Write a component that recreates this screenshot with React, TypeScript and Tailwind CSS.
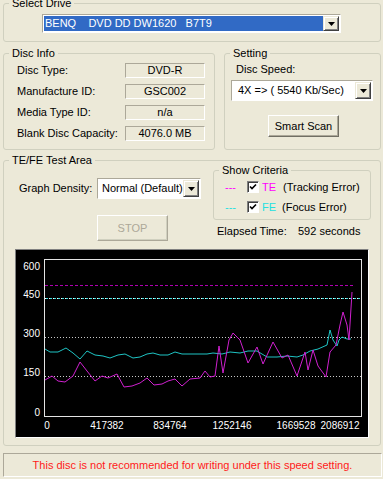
import React from "react";

const cyanPts = [
  [45, 349], [50, 352], [58, 352], [66, 348], [73, 353], [80, 359], [87, 351], [95, 355],
  [103, 356], [110, 358], [118, 355], [125, 354], [133, 358], [140, 357], [147, 354],
  [153, 353], [160, 355], [168, 355], [175, 352], [182, 354], [190, 354], [207, 354],
  [213, 353], [222, 354], [230, 352], [240, 353], [248, 351], [257, 351], [267, 357],
  [277, 357], [287, 356], [297, 357], [303, 355], [310, 351], [318, 349], [327, 345],
  [330, 330], [333, 340], [337, 346], [339, 340], [342, 337], [347, 339], [351, 339],
];

const magentaPts = [
  [45, 380], [52, 376], [58, 381], [65, 382], [73, 376], [80, 362], [87, 371], [95, 381],
  [102, 376], [108, 378], [117, 374], [124, 387], [132, 386], [140, 383], [147, 378],
  [154, 385], [162, 384], [168, 381], [175, 379], [182, 386], [190, 379], [200, 378],
  [205, 371], [210, 377], [215, 376], [219, 346], [223, 373], [229, 340], [233, 333],
  [240, 340], [248, 363], [257, 347], [263, 364], [273, 342], [282, 358], [288, 355],
  [297, 376], [305, 352], [308, 370], [313, 350], [318, 366], [326, 377], [330, 352],
  [336, 345], [340, 325], [343, 312], [347, 325], [349, 340], [352, 292],
];

const yLabels = [
  { t: "600", y: 266 },
  { t: "450", y: 294 },
  { t: "300", y: 333 },
  { t: "150", y: 372 },
  { t: "0", y: 412 },
];

const xLabels = [
  { t: "0", x: 47 },
  { t: "417382", x: 107 },
  { t: "834764", x: 170 },
  { t: "1252146", x: 232 },
  { t: "1669528", x: 296 },
  { t: "2086912", x: 340 },
];

function Group({ title, className, children }: { title: string; className: string; children?: React.ReactNode }) {
  return (
    <fieldset className={"min-w-0 rounded-[3px] border border-[#D0D0BF] " + className}>
      <legend className="ml-[5px] px-[3px] leading-[13px]">{title}</legend>
      {children}
    </fieldset>
  );
}

function ArrowBtn() {
  return (
    <span className="flex h-full w-[16px] shrink-0 items-center justify-center border border-t-[#ECE9D8] border-l-[#ECE9D8] border-r-[#404040] border-b-[#404040] bg-[#ECE9D8] shadow-[inset_1px_1px_0_#fff,inset_-1px_-1px_0_#808080]">
      <svg width="7" height="4" viewBox="0 0 7 4">
        <path d="M0 0h7L3.5 4z" fill="#000" />
      </svg>
    </span>
  );
}

function Check() {
  return (
    <span className="flex h-[12px] w-[12px] shrink-0 items-center justify-center border border-t-[#808080] border-l-[#808080] border-b-white border-r-white bg-white shadow-[inset_1px_1px_0_#404040]">
      <svg width="8" height="8" viewBox="0 0 8 8">
        <path d="M1 3.5L3 5.5L7 1.5" stroke="#000" strokeWidth="1.6" fill="none" />
      </svg>
    </span>
  );
}

function InfoRow({ label, value }: { label: string; value: string }) {
  return (
    <div className="flex h-[15px] items-center pl-[13px]">
      <span className="w-[108px]">{label}</span>
      <span className="flex h-[15px] w-[80px] items-center justify-center border border-t-[#ACA899] border-l-[#ACA899] border-b-white border-r-white">
        {value}
      </span>
    </div>
  );
}

export default function App() {
  return (
    <div className="flex h-[479px] w-[383px] flex-col overflow-hidden bg-[#ECE9D8] pl-[3px] pr-[2px] font-['Liberation_Sans',Arial,sans-serif] text-[11px] leading-[13px] text-black">
      {/* select drive */}
      <Group title="Select Drive" className="-mt-[3px] h-[45px] w-[378px] shrink-0">
        <div className="ml-[38px] mt-[4px] flex h-[19px] w-[299px] border border-t-[#ACA899] border-l-[#ACA899] border-b-white border-r-white bg-white p-[1px]">
          <span className="flex flex-1 items-center whitespace-pre bg-[#316AC5] pl-[1px] text-white">
            {"BENQ    DVD DD DW1620   B7T9"}
          </span>
          <ArrowBtn />
        </div>
      </Group>

      <div className="mt-[5px] flex shrink-0">
        <Group title="Disc Info" className="h-[103px] w-[212px]">
          <div className="flex flex-col gap-[6px] pt-[3px]">
            <InfoRow label="Disc Type:" value="DVD-R" />
            <InfoRow label="Manufacture ID:" value="GSC002" />
            <InfoRow label="Media Type ID:" value="n/a" />
            <InfoRow label="Blank Disc Capacity:" value="4076.0 MB" />
          </div>
        </Group>
        <Group title="Setting" className="ml-[9px] h-[103px] w-[157px]">
          <div className="mt-[3px] pl-[11px]">Disc Speed:</div>
          <div className="ml-[6px] mt-[4px] flex h-[21px] w-[142px] border border-t-[#ACA899] border-l-[#ACA899] border-b-white border-r-white bg-white p-[1px]">
            <span className="flex flex-1 items-center pl-[5px]">4X =&gt; ( 5540 Kb/Sec)</span>
            <ArrowBtn />
          </div>
          <button className="ml-[43px] mt-[14px] flex h-[22px] w-[71px] items-center justify-center border border-t-white border-l-white border-r-[#716F64] border-b-[#716F64] bg-[#ECE9D8] shadow-[inset_-1px_-1px_0_#ACA899]">
            Smart Scan
          </button>
        </Group>
      </div>

      {/* test area */}
      <Group title="TE/FE Test Area" className="mt-[4px] h-[292px] w-[378px] shrink-0">
        <div className="flex h-[82px]">
          <div className="w-[209px] pt-[11px]">
            <div className="flex items-center pl-[15px]">
              <span className="w-[78px]">Graph Density:</span>
              <div className="flex h-[21px] w-[104px] border border-t-[#ACA899] border-l-[#ACA899] border-b-white border-r-white bg-white p-[1px]">
                <span className="flex flex-1 items-center pl-[3px]">Normal (Default)</span>
                <ArrowBtn />
              </div>
            </div>
            <button className="ml-[93px] mt-[16px] flex h-[26px] w-[71px] items-center justify-center border border-t-white border-l-white border-r-[#ACA899] border-b-[#ACA899] bg-[#ECE9D8] text-[#ACA899] shadow-[inset_-1px_-1px_0_#D0D0BF]">
              STOP
            </button>
          </div>
          <div className="-mt-[3px]">
            <Group title="Show Criteria" className="h-[56px] w-[158px]">
              <div className="mt-[3px] flex h-[14px] items-center pl-[11px]">
                <span className="w-[22px] text-[#ff00ff]">---</span>
                <Check />
                <span className="ml-[3px] w-[21px] text-[#ff00ff]">TE</span>
                <span>(Tracking Error)</span>
              </div>
              <div className="mt-[6px] flex h-[14px] items-center pl-[11px]">
                <span className="w-[22px] text-[#22e0e0]">---</span>
                <Check />
                <span className="ml-[3px] w-[20px] text-[#22e0e0]">FE</span>
                <span>(Focus Error)</span>
              </div>
            </Group>
            <div className="ml-[4px] mt-[5px] flex">
              <span className="w-[81px]">Elapsed Time:</span>
              <span>592 seconds</span>
            </div>
          </div>
        </div>

        {/* graph */}
        <div className="ml-[11px] h-[189px] w-[354px] border border-t-[#808080] border-l-[#808080] border-b-white border-r-white">
          <svg width="352" height="187" viewBox="16 250 352 187" className="block">
            <rect x="16" y="250" width="352" height="187" fill="#000" />
            <rect x="44.5" y="259.5" width="317" height="157" fill="none" stroke="#e4e4e4" />
            <line x1="45" y1="285.5" x2="355" y2="285.5" stroke="#b000b0" strokeDasharray="3 2" />
            <line x1="45" y1="298.5" x2="361" y2="298.5" stroke="#40e0e0" strokeDasharray="3 1" />
            <line x1="45" y1="298.5" x2="361" y2="298.5" stroke="#ffffff" strokeDasharray="1 3" />
            <line x1="45" y1="337.5" x2="361" y2="337.5" stroke="#c8c8c8" strokeDasharray="1 2" />
            <line x1="45" y1="376.5" x2="361" y2="376.5" stroke="#c8c8c8" strokeDasharray="1 2" />
            <polyline points={cyanPts.map((p) => p.join(",")).join(" ")} fill="none" stroke="#1fc4c4" strokeWidth="1" />
            <polyline points={magentaPts.map((p) => p.join(",")).join(" ")} fill="none" stroke="#d020d0" strokeWidth="1" />
            {yLabels.map((l) => (
              <text key={l.t} x="40" y={l.y + 4} textAnchor="end" fill="#fff" fontSize="10" fontFamily="Liberation Sans, Arial, sans-serif">
                {l.t}
              </text>
            ))}
            {xLabels.map((l) => (
              <text key={l.t} x={l.x} y="429" textAnchor="middle" fill="#fff" fontSize="10" fontFamily="Liberation Sans, Arial, sans-serif">
                {l.t}
              </text>
            ))}
          </svg>
        </div>
      </Group>

      <div className="mt-[7px] flex h-[24px] w-[379px] shrink-0 items-center justify-center border border-t-[#ACA899] border-l-[#ACA899] border-b-white border-r-white text-[#ff1a1a]">
        This disc is not recommended for writing under this speed setting.
      </div>
    </div>
  );
}
